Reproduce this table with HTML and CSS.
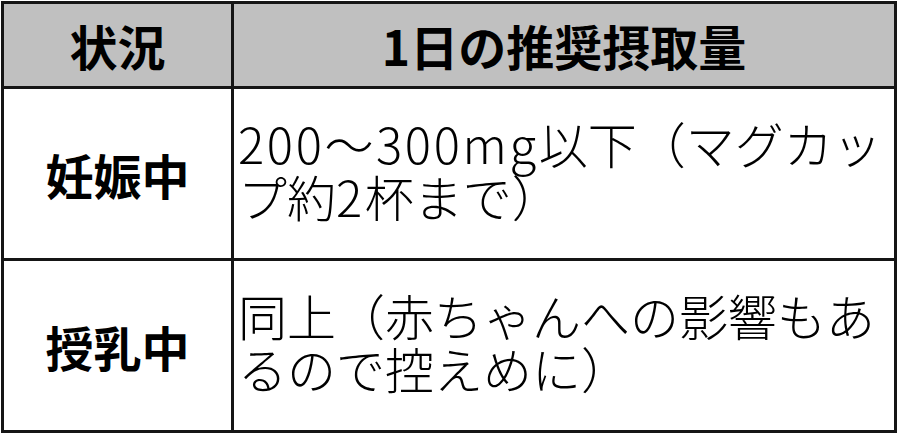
FILE: index.html
```html
<!DOCTYPE html>
<html lang="ja">
<head>
<meta charset="utf-8">
<link rel="stylesheet" href="styles.css">
</head>
<body>
<div class="table">
  <div class="cell head">状況</div>
  <div class="cell head">1日の推奨摂取量</div>
  <div class="cell label">妊娠中</div>
  <div class="cell body"><p class="text"><span class="latin">200〜300mg</span>以下（マグカッ<br>プ約<span class="latin">2</span>杯まで）</p></div>
  <div class="cell label">授乳中</div>
  <div class="cell body"><p class="text">同上（赤ちゃんへの影響もあ<br>るので控えめに）</p></div>
</div>
</body>
</html>
```
FILE: styles.css
```css
html, body {
  margin: 0;
  padding: 0;
  background: #ffffff;
}
body {
  font-family: "Noto Sans CJK JP", "Noto Sans", sans-serif;
  color: #000;
}
.table {
  margin: 1px 0 0 1px;
  width: 896px;
  height: 432px;
  box-sizing: border-box;
  display: grid;
  grid-template-columns: 227px 660px;
  grid-template-rows: 82px 169px 169px;
  gap: 3px;
  padding: 3px;
  background: #151515;
}
.cell {
  background: #fff;
  display: flex;
  align-items: center;
}
.head {
  background: #c0c0c0;
  justify-content: center;
  font-weight: 700;
  font-size: 48px;
  line-height: 1;
}
.label {
  justify-content: center;
  font-weight: 700;
  font-size: 48px;
  line-height: 1;
}
.body {
  padding: 0 0 10px 4px;
  box-sizing: border-box;
}
.text {
  margin: 0;
  font-weight: 300;
  font-size: 49px;
  line-height: 53px;
  white-space: nowrap;
}
.latin {
  letter-spacing: 2.6px;
}
```
